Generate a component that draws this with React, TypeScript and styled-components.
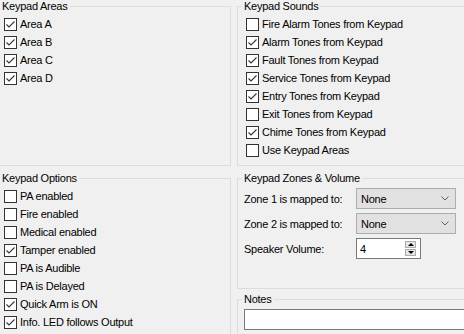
import styled, { createGlobalStyle } from 'styled-components';

const GlobalStyle = createGlobalStyle`
  html, body {
    margin: 0;
    padding: 0;
    background: #f0f0f0;
    overflow: hidden;
  }
  body {
    font-family: "Liberation Sans", Arial, sans-serif;
    font-size: 11px;
    letter-spacing: -0.25px;
    color: #000;
  }
`;

const Page = styled.div`
  display: grid;
  grid-template-columns: 236px 240px;
  grid-template-rows: 166px auto;
  column-gap: 6px;
  row-gap: 6px;
  margin-left: -5px;
  width: 482px;
  height: 334px;
`;

const GroupBox = styled.fieldset<{ $height?: number }>`
  box-sizing: border-box;
  margin: 0;
  padding: 2px 6px 0 6px;
  min-width: 0;
  border: 1px solid #dcdcdc;
  height: ${(p) => (p.$height ? `${p.$height}px` : 'auto')};
`;

const Legend = styled.legend`
  padding: 0 2px;
  margin-left: -2px;
  line-height: 13px;
  font-size: 11px;
`;

const CheckList = styled.div`
  display: flex;
  flex-direction: column;
`;

const CheckRow = styled.label`
  display: flex;
  align-items: center;
  gap: 3px;
  height: 18px;
  padding-left: 2px;
  white-space: nowrap;
`;

const Box = styled.span`
  box-sizing: border-box;
  width: 13px;
  height: 13px;
  flex: none;
  background: #fff;
  border: 1px solid #333;
  display: flex;
  align-items: center;
  justify-content: center;
`;

const Column = styled.div`
  display: flex;
  flex-direction: column;
  gap: 4px;
`;

const FieldRow = styled.div<{ $first?: boolean }>`
  display: flex;
  align-items: center;
  height: 21px;
  margin-top: ${(p) => (p.$first ? '1px' : '4px')};
`;

const FieldLabel = styled.span`
  width: 112px;
  flex: none;
`;

const Select = styled.div`
  box-sizing: border-box;
  width: 100px;
  height: 21px;
  padding: 0 6px 0 4px;
  display: flex;
  align-items: center;
  justify-content: space-between;
  background: #e1e1e1;
  border: 1px solid #adadad;
`;

const SpinBox = styled.div`
  box-sizing: border-box;
  width: 65px;
  height: 21px;
  padding: 0 4px 0 3px;
  display: flex;
  align-items: center;
  justify-content: space-between;
  background: #fff;
  border: 1px solid #7a7a7a;
`;

const SpinButtons = styled.div`
  display: flex;
  flex-direction: column;
  gap: 1px;
`;

const SpinButton = styled.span<{ $up?: boolean }>`
  box-sizing: border-box;
  width: 11px;
  height: 7px;
  background: #e6e6e6;
  border: 1px solid #acacac;
  display: flex;
  align-items: center;
  justify-content: center;
  &::after {
    content: '';
    width: 0;
    height: 0;
    border-left: 3px solid transparent;
    border-right: 3px solid transparent;
    ${(p) => (p.$up ? 'border-bottom: 3px solid #000;' : 'border-top: 3px solid #000;')}
  }
`;

const TextBox = styled.div`
  box-sizing: border-box;
  height: 21px;
  margin-top: 1px;
  background: #fff;
  border: 1px solid #7a7a7a;
`;

const CheckMark = () => (
  <svg width="11" height="11" viewBox="0 0 11 11">
    <path d="M1.5 5.5 L4 8 L9.5 2.5" fill="none" stroke="#333" strokeWidth="1.1" />
  </svg>
);

const Chevron = () => (
  <svg width="8" height="5" viewBox="0 0 8 5">
    <path d="M0.5 0.5 L4 4 L7.5 0.5" fill="none" stroke="#606060" strokeWidth="1" />
  </svg>
);

type Item = [string, boolean];

const areas: Item[] = [
  ['Area A', true],
  ['Area B', true],
  ['Area C', true],
  ['Area D', true],
];

const sounds: Item[] = [
  ['Fire Alarm Tones from Keypad', false],
  ['Alarm Tones from Keypad', true],
  ['Fault Tones from Keypad', true],
  ['Service Tones from Keypad', true],
  ['Entry Tones from Keypad', true],
  ['Exit Tones from Keypad', false],
  ['Chime Tones from Keypad', true],
  ['Use Keypad Areas', false],
];

const options: Item[] = [
  ['PA enabled', false],
  ['Fire enabled', false],
  ['Medical enabled', false],
  ['Tamper enabled', true],
  ['PA is Audible', false],
  ['PA is Delayed', false],
  ['Quick Arm is ON', true],
  ['Info. LED follows Output', true],
];

const Checks = ({ items }: { items: Item[] }) => (
  <CheckList>
    {items.map(([text, checked]) => (
      <CheckRow key={text}>
        <Box>{checked && <CheckMark />}</Box>
        {text}
      </CheckRow>
    ))}
  </CheckList>
);

const App = () => {
  return (
    <>
      <GlobalStyle />
      <Page>
        <GroupBox $height={166}>
          <Legend>Keypad Areas</Legend>
          <Checks items={areas} />
        </GroupBox>
        <GroupBox $height={166}>
          <Legend>Keypad Sounds</Legend>
          <Checks items={sounds} />
        </GroupBox>
        <GroupBox $height={200}>
          <Legend>Keypad Options</Legend>
          <Checks items={options} />
        </GroupBox>
        <Column>
          <GroupBox $height={117}>
            <Legend>Keypad Zones &amp; Volume</Legend>
            <FieldRow $first>
              <FieldLabel>Zone 1 is mapped to:</FieldLabel>
              <Select>
                None
                <Chevron />
              </Select>
            </FieldRow>
            <FieldRow>
              <FieldLabel>Zone 2 is mapped to:</FieldLabel>
              <Select>
                None
                <Chevron />
              </Select>
            </FieldRow>
            <FieldRow>
              <FieldLabel>Speaker Volume:</FieldLabel>
              <SpinBox>
                4
                <SpinButtons>
                  <SpinButton $up />
                  <SpinButton />
                </SpinButtons>
              </SpinBox>
            </FieldRow>
          </GroupBox>
          <GroupBox $height={60}>
            <Legend>Notes</Legend>
            <TextBox />
          </GroupBox>
        </Column>
      </Page>
    </>
  );
};

export default App;
